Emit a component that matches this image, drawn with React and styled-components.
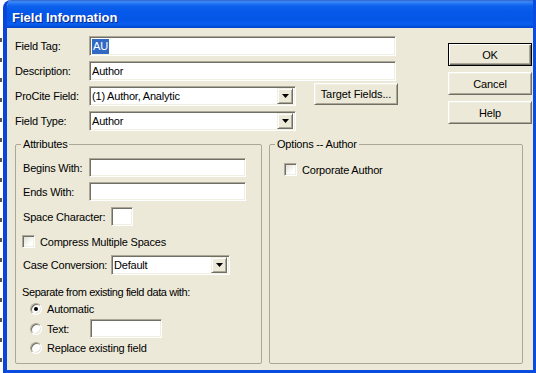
import React from 'react';
import styled, { createGlobalStyle } from 'styled-components';

const GlobalStyle = createGlobalStyle`
  html, body {
    margin: 0;
    padding: 0;
    background: #fff;
  }
  body {
    font-family: "Liberation Sans", Arial, sans-serif;
    font-size: 11px;
    color: #000;
  }
`;

const Screen = styled.div`
  display: flex;
  width: 536px;
  height: 373px;
  overflow: hidden;
  background: #fff;
`;

// sliver of the window that sits behind the dialog (only glyph edges show)
const Behind = styled.div`
  flex: none;
  width: 3px;
  background:
    repeating-linear-gradient(
      to bottom,
      transparent 0,
      transparent 12px,
      #555 12px,
      #555 16px,
      transparent 16px,
      transparent 20px
    )
    0 26px / 2px 100% no-repeat,
    #fff;
`;

const Window = styled.div`
  flex: 1;
  display: flex;
  flex-direction: column;
  border-style: solid;
  border-color: #0a4ce0;
  border-width: 0 3px 3px 4px;
  border-left-color: #0845d8;
  border-top-left-radius: 8px;
  overflow: hidden;
  background: #ece9d8;
`;

const TitleBar = styled.div`
  flex: none;
  height: 28px;
  box-sizing: border-box;
  padding: 7px 0 0 5px;
  display: flex;
  align-items: center;
  background: linear-gradient(
    to bottom,
    #2f62cc 0,
    #3d8ef9 2px,
    #2a7af6 3px,
    #0c61ec 6px,
    #0558e9 12px,
    #0456e6 20px,
    #0a5ef0 24px,
    #0553e0 26px,
    #0443c8 28px
  );
  color: #fff;
  font-weight: bold;
  font-size: 13px;
  text-shadow: 1px 1px 0 #0a2a8a;
`;

const Body = styled.div`
  flex: 1;
  display: flex;
  flex-direction: column;
  padding: 8px 1px 6px 8px;
`;

const TopSection = styled.div`
  display: flex;
  align-items: flex-start;
`;

const Fields = styled.div`
  flex: none;
  width: 383px;
  display: flex;
  flex-direction: column;
  gap: 5px;
`;

const Row = styled.div`
  display: flex;
  align-items: center;
  height: ${p => p.$h || 20}px;
  margin-top: ${p => p.$mt || 0}px;
  margin-left: ${p => p.$ml || 0}px;
`;

const Label = styled.span`
  flex: none;
  width: ${p => (p.$w ? `${p.$w}px` : 'auto')};
  white-space: nowrap;
  letter-spacing: ${p => p.$ls || -0.2}px;
`;

const TextBox = styled.div`
  flex: none;
  box-sizing: border-box;
  width: ${p => p.$w}px;
  height: ${p => p.$h || 20}px;
  display: flex;
  align-items: center;
  justify-content: space-between;
  padding: 0 2px 0 2px;
  background: #fff;
  border: 1px solid;
  border-color: #aca899 #fff #fff #aca899;
  box-shadow: inset 1px 1px 0 #716f64, inset -1px -1px 0 #f1efe2;
  white-space: nowrap;
  letter-spacing: -0.2px;
`;

const Selected = styled.span`
  background: #316ac5;
  color: #fff;
  padding: 0 1px;
  line-height: 15px;
`;

const ArrowButton = styled.div`
  flex: none;
  box-sizing: border-box;
  width: 16px;
  height: 16px;
  display: flex;
  align-items: center;
  justify-content: center;
  background: #ece9d8;
  border: 1px solid;
  border-color: #f1efe2 #716f64 #716f64 #f1efe2;
  box-shadow: inset 1px 1px 0 #fff, inset -1px -1px 0 #aca899;
`;

const PushButton = styled.div`
  flex: none;
  box-sizing: border-box;
  width: 84px;
  height: ${p => p.$h || 23}px;
  display: flex;
  align-items: center;
  justify-content: center;
  background: #ece9d8;
  letter-spacing: -0.1px;
  border: 1px solid;
  border-color: ${p => (p.$default ? '#000' : '#fff #716f64 #716f64 #fff')};
  box-shadow: ${p =>
    p.$default
      ? 'inset 1px 1px 0 #fff, inset -1px -1px 0 #716f64, inset -2px -2px 0 #aca899'
      : 'inset 1px 1px 0 #f1efe2, inset -1px -1px 0 #aca899'};
`;

const TargetButton = styled(PushButton)`
  align-self: flex-start;
  margin: -3px 0 0 18px;
`;

const ButtonColumn = styled.div`
  flex: none;
  display: flex;
  flex-direction: column;
  gap: 6px;
  margin: 7px 0 0 50px;
`;

const GroupRow = styled.div`
  flex: 1;
  display: flex;
  gap: 7px;
  margin: 6px 9px 0 0;
`;

const GroupBox = styled.fieldset`
  margin: 0;
  padding: 0;
  min-width: 0;
  box-sizing: border-box;
  ${p => (p.$w ? `width: ${p.$w}px; flex: none;` : 'flex: 1;')}
  border: 1px solid #aca899;
  border-radius: 2px;
`;

const GroupTitle = styled.legend`
  margin-left: 5px;
  padding: 0 2px;
  line-height: 14px;
  letter-spacing: -0.2px;
`;

const GroupBody = styled.div`
  display: flex;
  flex-direction: column;
  padding: 7px 8px 0 7px;
`;

const CheckBox = styled.span`
  flex: none;
  box-sizing: border-box;
  width: 13px;
  height: 13px;
  margin-right: 5px;
  background: linear-gradient(135deg, #dcdad0, #fff 70%);
  border: 1px solid;
  border-color: #aca899 #fff #fff #aca899;
  box-shadow: inset 1px 1px 0 #716f64, inset -1px -1px 0 #f1efe2;
`;

const Radio = styled.span`
  flex: none;
  position: relative;
  box-sizing: border-box;
  width: 12px;
  height: 12px;
  margin-right: 5px;
  border-radius: 50%;
  background: #fff;
  border: 1px solid;
  border-color: #aca899 #fff #fff #aca899;
  box-shadow: inset 1px 1px 0 #716f64, inset -1px -1px 0 #e6e3d6;

  &::after {
    content: '';
    display: ${p => (p.$checked ? 'block' : 'none')};
    position: absolute;
    left: 3px;
    top: 3px;
    width: 4px;
    height: 4px;
    border-radius: 50%;
    background: #000;
  }
`;

const DownArrow = () => (
  <svg width="7" height="4" viewBox="0 0 7 4">
    <polygon points="0,0 7,0 3.5,4" fill="#000" />
  </svg>
);

const Combo = ({ w, h, value }) => (
  <TextBox $w={w} $h={h}>
    <span>{value}</span>
    <ArrowButton>
      <DownArrow />
    </ArrowButton>
  </TextBox>
);

const App = () => (
  <>
    <GlobalStyle />
    <Screen>
      <Behind />
      <Window>
        <TitleBar>Field Information</TitleBar>
        <Body>
          <TopSection>
            <Fields>
              <Row>
                <Label $w={74}>Field Tag:</Label>
                <TextBox $w={307}>
                  <Selected>AU</Selected>
                </TextBox>
              </Row>
              <Row>
                <Label $w={74}>Description:</Label>
                <TextBox $w={307}>
                  <span>Author</span>
                </TextBox>
              </Row>
              <Row>
                <Label $w={74}>ProCite Field:</Label>
                <Combo w={207} value="(1) Author, Analytic" />
                <TargetButton $h={22}>Target Fields...</TargetButton>
              </Row>
              <Row>
                <Label $w={74}>Field Type:</Label>
                <Combo w={207} value="Author" />
              </Row>
            </Fields>
            <ButtonColumn>
              <PushButton $default>OK</PushButton>
              <PushButton>Cancel</PushButton>
              <PushButton>Help</PushButton>
            </ButtonColumn>
          </TopSection>

          <GroupRow>
            <GroupBox $w={247}>
              <GroupTitle>Attributes</GroupTitle>
              <GroupBody>
                <Row $h={19}>
                  <Label $w={66}>Begins With:</Label>
                  <TextBox $w={157} $h={19} />
                </Row>
                <Row $h={19} $mt={5}>
                  <Label $w={66}>Ends With:</Label>
                  <TextBox $w={157} $h={19} />
                </Row>
                <Row $h={19} $mt={6}>
                  <Label $w={88}>Space Character:</Label>
                  <TextBox $w={22} $h={19} />
                </Row>
                <Row $h={13} $mt={9} $ml={-1}>
                  <CheckBox />
                  <Label>Compress Multiple Spaces</Label>
                </Row>
                <Row $h={20} $mt={7}>
                  <Label $w={88}>Case Conversion:</Label>
                  <Combo w={119} value="Default" />
                </Row>
                <Row $h={14} $mt={10} $ml={-1}>
                  <Label $ls={-0.4}>Separate from existing field data with:</Label>
                </Row>
                <Row $h={14} $mt={3} $ml={7}>
                  <Radio $checked />
                  <Label>Automatic</Label>
                </Row>
                <Row $h={19} $mt={3} $ml={7}>
                  <Radio />
                  <Label $w={43}>Text:</Label>
                  <TextBox $w={72} $h={19} />
                </Row>
                <Row $h={14} $mt={3} $ml={7}>
                  <Radio />
                  <Label>Replace existing field</Label>
                </Row>
              </GroupBody>
            </GroupBox>

            <GroupBox>
              <GroupTitle>Options -- Author</GroupTitle>
              <GroupBody>
                <Row $h={13} $mt={5} $ml={7}>
                  <CheckBox />
                  <Label>Corporate Author</Label>
                </Row>
              </GroupBody>
            </GroupBox>
          </GroupRow>
        </Body>
      </Window>
    </Screen>
  </>
);

export default App;
